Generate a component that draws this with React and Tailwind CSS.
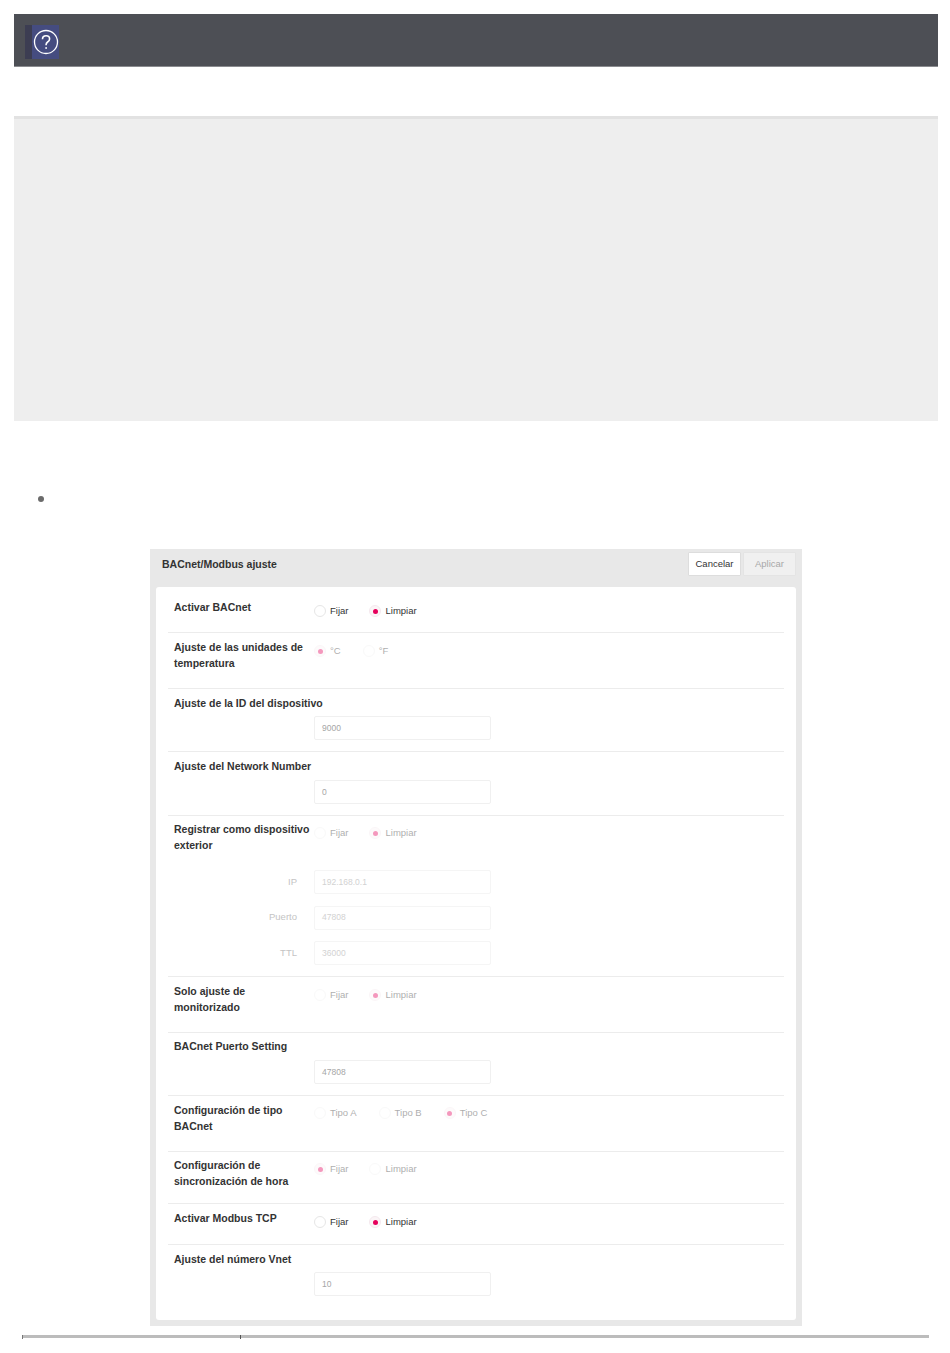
import React from "react";

const font = { fontFamily: '"Liberation Sans", Arial, sans-serif' };

function Radio({ label, on, off }) {
	return (
		<div className={`flex items-center gap-[4px] ${off ? "opacity-40" : ""}`}>
			<span
				className={`flex h-[12px] w-[12px] items-center justify-center rounded-full border ${
					on ? "border-[#f5e9ee] bg-[#fbf5f7]" : off ? "border-[#f0f0f0] bg-white" : "border-[#e6e6e6] bg-white"
				}`}
			>
				{on && <span className="h-[5px] w-[5px] rounded-full bg-[#e6005c]" />}
			</span>
			<span className="text-[9.5px] leading-[12px] text-[#333]">{label}</span>
		</div>
	);
}

function Radios({ items, selected, off, gap = "gap-[21px]" }) {
	return (
		<div className={`flex ${gap}`}>
			{items.map((item) => (
				<Radio key={item} label={item} on={item === selected} off={off} />
			))}
		</div>
	);
}

function Input({ value, off }) {
	return (
		<div
			className={`flex h-[24px] w-[177px] items-center rounded-[2px] border bg-white px-[7px] text-[8.5px] ${
				off ? "border-[#f5f5f5] text-[#d2d2d2]" : "border-[#f0f0f0] text-[#a6a6a6]"
			}`}
		>
			{value}
		</div>
	);
}

function Label({ children }) {
	return (
		<div className="w-[140px] shrink-0 text-[10.5px] font-bold leading-[16px] text-[#333]">
			{children}
		</div>
	);
}

function RadioRow({ label, height, top, radioTop, children }) {
	return (
		<div className={`border-b border-[#ececec] ${height} ${top} pl-[6px]`}>
			<div className="flex">
				<Label>{label}</Label>
				<div className={radioTop}>{children}</div>
			</div>
		</div>
	);
}

function InputRow({ label, value, height = "h-[63px]", top = "pt-[6px]", gap = "mt-[6px]" }) {
	return (
		<div className={`border-b border-[#ececec] ${height} ${top} pl-[6px]`}>
			<div className="text-[10.5px] font-bold leading-[16px] text-[#333]">{label}</div>
			<div className={`${gap} ml-[140px]`}>
				<Input value={value} />
			</div>
		</div>
	);
}

function SubField({ label, value }) {
	return (
		<div className="flex h-[24px] items-center">
			<div className="w-[123px] text-right text-[9.5px] text-[#c4c4c4]">{label}</div>
			<div className="ml-[17px]">
				<Input value={value} off />
			</div>
		</div>
	);
}

export default function App() {
	return (
		<div className="h-[1353px] overflow-hidden bg-white pt-[14px]" style={font}>
			<div className="ml-[14px] mr-[12px] flex h-[53px] items-center border-b border-[#8a8b8f] bg-[#4d4f55] pl-[11px] pt-[4px]">
				<div className="flex h-[34px] items-center">
					<div className="h-[34px] w-[7px] bg-[#3c3d52]" />
					<div className="flex h-[34px] w-[27px] items-center justify-center bg-[#454c80]">
						<svg width="26" height="26" viewBox="0 0 26 26" fill="none" stroke="white" strokeWidth="1.3">
							<circle cx="13" cy="13" r="11.5" />
							<path d="M9.5 10.2c0-2 1.6-3.4 3.6-3.4s3.5 1.3 3.5 3.2c0 1.5-.9 2.3-2 3-1 .7-1.5 1.3-1.5 2.6v.6" strokeWidth="1.6" />
							<circle cx="13.1" cy="19" r="0.9" fill="white" stroke="none" />
						</svg>
					</div>
				</div>
			</div>

			<div className="ml-[14px] mr-[12px] mt-[49px] h-[305px] border-t-[3px] border-[#e2e2e2] bg-[#eeeeee]" />

			<div className="ml-[38px] mt-[75px] h-[6px] w-[6px] rounded-full bg-[#6b6b6b]" />

			<div className="ml-[150px] mr-[148px] mt-[47px] h-[777px] bg-[#e8e8e8] px-[6px] pb-[6px]">
				<div className="flex h-[38px] items-start justify-between pl-[6px] pt-[3px]">
					<div className="pt-[5px] text-[10.5px] font-bold leading-[14px] text-[#333]">BACnet/Modbus ajuste</div>
					<div className="flex gap-[2px]">
						<div className="flex h-[24px] w-[53px] items-center justify-center rounded-[1px] border border-[#dddddd] bg-white text-[9.5px] text-[#333]">
							Cancelar
						</div>
						<div className="flex h-[24px] w-[53px] items-center justify-center rounded-[1px] border border-[#e4e4e4] bg-[#f0f0f0] text-[9.5px] text-[#a8a8a8]">
							Aplicar
						</div>
					</div>
				</div>

				<div className="h-[733px] rounded-[3px] bg-white px-[12px]">
					<RadioRow label="Activar BACnet" height="h-[46px]" top="pt-[12px]" radioTop="pt-[6px]">
						<Radios items={["Fijar", "Limpiar"]} selected="Limpiar" />
					</RadioRow>
					<RadioRow label="Ajuste de las unidades de temperatura" height="h-[56px]" top="pt-[6px]" radioTop="pt-[6px]">
						<Radios items={["°C", "°F"]} selected="°C" off gap="gap-[22px]" />
					</RadioRow>
					<InputRow label="Ajuste de la ID del dispositivo" value="9000" gap="mt-[5px]" />
					<InputRow label="Ajuste del Network Number" value="0" height="h-[64px]" />
					<div className="h-[161px] border-b border-[#ececec] pt-[5px] pl-[6px]">
						<div className="flex">
							<Label>Registrar como dispositivo exterior</Label>
							<div className="pt-[6px]">
								<Radios items={["Fijar", "Limpiar"]} selected="Limpiar" off />
							</div>
						</div>
						<div className="mt-[17px] flex flex-col gap-[11.5px]">
							<SubField label="IP" value="192.168.0.1" />
							<SubField label="Puerto" value="47808" />
							<SubField label="TTL" value="36000" />
						</div>
					</div>
					<RadioRow
						label={<>Solo ajuste de<br />monitorizado</>}
						height="h-[56px]"
						top="pt-[6px]"
						radioTop="pt-[6px]"
					>
						<Radios items={["Fijar", "Limpiar"]} selected="Limpiar" off />
					</RadioRow>
					<InputRow label="BACnet Puerto Setting" value="47808" top="pt-[5px]" />
					<RadioRow label="Configuración de tipo BACnet" height="h-[56px]" top="pt-[6px]" radioTop="pt-[5px]">
						<Radios items={["Tipo A", "Tipo B", "Tipo C"]} selected="Tipo C" off gap="gap-[22px]" />
					</RadioRow>
					<RadioRow label="Configuración de sincronización de hora" height="h-[52px]" top="pt-[5px]" radioTop="pt-[6px]">
						<Radios items={["Fijar", "Limpiar"]} selected="Fijar" off />
					</RadioRow>
					<RadioRow label="Activar Modbus TCP" height="h-[41px]" top="pt-[6px]" radioTop="pt-[6px]">
						<Radios items={["Fijar", "Limpiar"]} selected="Limpiar" />
					</RadioRow>
					<div className="pt-[6px] pl-[6px]">
						<div className="text-[10.5px] font-bold leading-[16px] text-[#333]">Ajuste del número Vnet</div>
						<div className="mt-[5px] ml-[140px]">
							<Input value="10" />
						</div>
					</div>
				</div>
			</div>

			<div className="ml-[22px] mr-[21px] mt-[9px] flex h-[3px] bg-[#bcbcbc]">
				<div className="h-[4px] w-[1px] bg-[#777]" />
				<div className="ml-[217px] h-[4px] w-[1px] bg-[#555]" />
			</div>
		</div>
	);
}
